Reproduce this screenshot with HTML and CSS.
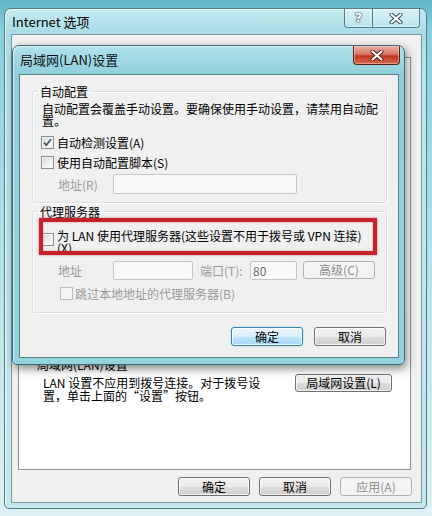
FILE: index.html
```html
<!DOCTYPE html>
<html lang="zh-CN">
<head>
<meta charset="utf-8">
<title>Internet 选项</title>
<link rel="stylesheet" href="styles.css">
</head>
<body>
<div class="desk">
  <div class="win">
    <div class="win-title">
      <span class="win-caption">Internet 选项</span>
      <div class="capbtns">
        <span class="cb help">?</span>
        <span class="cb close"><svg width="14" height="11" viewBox="0 0 14 11"><path d="M2.5 1.5 L11.5 9.5 M11.5 1.5 L2.5 9.5" stroke="#2b4a55" stroke-width="4" stroke-linecap="round"/><path d="M2.5 1.5 L11.5 9.5 M11.5 1.5 L2.5 9.5" stroke="#fff" stroke-width="2.2" stroke-linecap="round"/></svg></span>
      </div>
    </div>
    <div class="win-body">
      <div class="tabstrip"></div>
      <div class="page">
        <div class="lan-head"><span>局域网(LAN)设置</span><span class="rule"></span></div>
        <div class="lan-row">
          <p class="lan-text">LAN 设置不应用到拨号连接。对于拨号设置，单击上面的“设置”按钮。</p>
          <button class="btn lan-btn">局域网设置(L)</button>
        </div>
      </div>
      <div class="win-actions">
        <button class="btn">确定</button>
        <button class="btn">取消</button>
        <button class="btn disabled">应用(A)</button>
      </div>
    </div>
  </div>

  <div class="dlg">
    <div class="dlg-title">
      <span class="dlg-caption">局域网(LAN)设置</span>
      <span class="red-close"><svg width="14" height="11" viewBox="0 0 14 11"><path d="M2.5 1.5 L11.5 9.5 M11.5 1.5 L2.5 9.5" stroke="#5a1a10" stroke-width="4" stroke-linecap="round"/><path d="M2.5 1.5 L11.5 9.5 M11.5 1.5 L2.5 9.5" stroke="#fff" stroke-width="2.2" stroke-linecap="round"/></svg></span>
    </div>
    <div class="dlg-body">
      <fieldset class="group g1">
        <legend>自动配置</legend>
        <p class="desc">自动配置会覆盖手动设置。要确保使用手动设置，请禁用自动配置。</p>
        <div class="chk-row first">
          <span class="cbx"><svg width="11" height="11" viewBox="0 0 11 11"><path d="M2 5.5 L4.3 8.2 L9 2.2" fill="none" stroke="#3a5a78" stroke-width="1.8"/></svg></span>
          <span>自动检测设置(A)</span>
        </div>
        <div class="chk-row">
          <span class="cbx"></span>
          <span>使用自动配置脚本(S)</span>
        </div>
        <div class="addr-row">
          <span class="addr-label dim">地址(R)</span>
          <span class="field f-script"></span>
        </div>
      </fieldset>

      <fieldset class="group g2">
        <legend>代理服务器</legend>
        <div class="proxy-row">
          <span class="cbx"></span>
          <span class="proxy-text"><span class="pl">为 LAN 使用代理服务器(这些设置不用于拨号或 VPN 连接)</span><span class="pl">(X)</span></span>
          <span class="mark"></span>
        </div>
        <div class="addr-row a2">
          <span class="addr-label dim">地址</span>
          <span class="field f-addr"></span>
          <span class="port-label dim">端口(T):</span>
          <span class="field f-port">80</span>
          <button class="btn disabled adv">高级(C)</button>
        </div>
        <div class="chk-row skip">
          <span class="cbx dis"></span>
          <span class="dim">跳过本地地址的代理服务器(B)</span>
        </div>
      </fieldset>

      <div class="dlg-actions">
        <button class="btn focus">确定</button>
        <button class="btn">取消</button>
      </div>
    </div>
  </div>
</div>
</body>
</html>
```

FILE: styles.css
```css
html, body {
  margin: 0;
  padding: 0;
}
body {
  width: 432px;
  height: 516px;
  overflow: hidden;
  background: linear-gradient(180deg, #5fb4c7 0, #86cfdb 30px, #a9dde5 200px, #dff1f4 100%);
  font-family: "Noto Sans CJK SC", "Liberation Sans", sans-serif;
  font-size: 12px;
  color: #000;
}
.desk {
  position: relative;
  height: 516px;
}

/* buttons */
.btn {
  box-sizing: border-box;
  width: 72px;
  height: 19px;
  padding: 0;
  border: 1px solid #707070;
  border-radius: 3px;
  background: linear-gradient(180deg, #f2f2f2 0, #ebebeb 50%, #dddddd 51%, #cfcfcf 100%);
  box-shadow: inset 0 0 0 1px rgba(255,255,255,.75);
  font-family: "Noto Sans CJK SC", "Liberation Sans", sans-serif;
  font-size: 12px;
  line-height: 17px;
  color: #000;
  white-space: nowrap;
}
.btn.focus {
  border-color: #3c7fb1;
  background: linear-gradient(180deg, #eaf6fd 0, #d9f0fc 50%, #bee6fd 51%, #a7d9f5 100%);
  box-shadow: inset 0 0 0 1px rgba(255,255,255,.8), 0 0 2px #8fd0f0;
}
.btn.disabled {
  border-color: #adb2b5;
  background: #f4f4f4;
  color: #8d8d8d;
  box-shadow: none;
}

/* outer window */
.win {
  margin: 8px 0 0 4px;
  width: 423px;
  height: 501px;
  box-sizing: border-box;
  display: flex;
  flex-direction: column;
  border: 1px solid #4f7d88;
  border-radius: 7px 7px 5px 5px;
  background: linear-gradient(180deg, #c6ebf1 0, #a9dce6 24px, #b8e4eb 60px, #c4e9ef 100%);
  box-shadow: inset 1px 1px 0 rgba(255,255,255,.7);
}
.win-title {
  height: 25px;
  display: flex;
  align-items: flex-start;
  flex: none;
}
.win-caption {
  padding: 4px 0 0 7px;
  font-size: 13px;
  line-height: 17px;
}
.capbtns {
  margin-left: auto;
  margin-right: 6px;
  display: flex;
  height: 18px;
  border: 1px solid #4e7f8a;
  border-top: none;
  border-radius: 0 0 4px 4px;
  background: linear-gradient(180deg, rgba(255,255,255,.35), rgba(255,255,255,.1));
  box-shadow: inset 0 -1px 0 rgba(255,255,255,.6);
}
.cb {
  display: flex;
  align-items: center;
  justify-content: center;
}
.cb.help {
  width: 27px;
  font-family: "DejaVu Sans", sans-serif;
  font-weight: bold;
  font-size: 13px;
  line-height: 16px;
  color: #fff;
  text-shadow: 0 0 1px #2b4a55, 0 0 1px #2b4a55, 0 0 2px #2b4a55;
}
.cb.close {
  width: 46px;
  border-left: 1px solid #4e7f8a;
}
.win-body {
  flex: 1;
  margin: 0 4px 5px 6px;
  border: 1px solid #7b98a1;
  background: #f0f0f0;
  display: flex;
  flex-direction: column;
}
.tabstrip {
  height: 22px;
  flex: none;
}
.page {
  flex: 1;
  margin: 0 10px 0 6px;
  background: #fff;
  border: 1px solid #8e9196;
  padding-top: 299px;
  box-sizing: border-box;
}
.lan-head {
  display: flex;
  align-items: center;
  padding: 0 18px;
  line-height: 15px;
  height: 15px;
}
.rule {
  margin-left: auto;
  width: 185px;
  height: 1px;
  background: #a0a0a0;
  box-shadow: 0 1px 0 #fff;
}
.lan-row {
  display: flex;
  align-items: flex-start;
  margin-top: 2px;
}
.lan-text {
  margin: 2px 0 0 24px;
  width: 222px;
  line-height: 13px;
}
.btn.lan-btn {
  margin-left: auto;
  margin-right: 18px;
  width: 97px;
  height: 18px;
  line-height: 16px;
}
.win-actions {
  display: flex;
  justify-content: flex-end;
  gap: 9px;
  padding: 7px 9px 6px 0;
}

/* dialog */
.dlg {
  position: absolute;
  left: 12px;
  top: 37px;
  width: 393px;
  height: 320px;
  box-sizing: border-box;
  display: flex;
  flex-direction: column;
  border: 1px solid #3d6873;
  border-radius: 7px 7px 5px 5px;
  background: linear-gradient(180deg, #b0e2ea 0, #8fcfdb 28px, #93d3de 100%);
  box-shadow: inset 1px 1px 0 rgba(255,255,255,.6), 2px 4px 10px rgba(0,0,0,.45);
}
.dlg-title {
  height: 28px;
  flex: none;
  display: flex;
  align-items: flex-start;
}
.dlg-caption {
  padding: 5px 0 0 7px;
  font-size: 13px;
  line-height: 17px;
  color: #111;
}
.red-close {
  margin-left: auto;
  margin-right: 4px;
  width: 47px;
  height: 19px;
  box-sizing: border-box;
  display: flex;
  align-items: center;
  justify-content: center;
  border: 1px solid #5a1e14;
  border-top: none;
  border-radius: 0 0 4px 4px;
  background: linear-gradient(180deg, #eab0a2 0, #d9786a 45%, #c0361f 55%, #d4674e 100%);
  box-shadow: inset 0 0 0 1px rgba(255,220,210,.45);
}
.dlg-body {
  flex: 1;
  margin: 0 5px 6px 6px;
  border: 1px solid #5e7e88;
  background: #f0f0f0;
  padding: 0 11px 0 12px;
}
.group {
  margin: 0;
  min-width: 0;
  border: 1px solid #d5dfe5;
  border-radius: 3px;
  box-shadow: inset 1px 1px 0 #fff, 1px 1px 0 #fff;
}
.group legend {
  padding: 0 2px;
  margin-left: -4px;
  line-height: 15px;
  font-size: 12px;
}
.g1 {
  margin-top: 9px;
  padding: 0 8px 8px 9px;
}
.g2 {
  margin-top: 1px;
  padding: 0 8px 9px 9px;
}
.desc {
  margin: 4px 0 0;
  width: 340px;
  line-height: 12px;
}
.chk-row {
  display: flex;
  align-items: center;
  gap: 3px;
  height: 20px;
}
.chk-row.first {
  margin-top: 5px;
}
.cbx {
  flex: none;
  width: 13px;
  height: 13px;
  box-sizing: border-box;
  margin-left: -1px;
  border: 1px solid #8e8f8f;
  background: linear-gradient(135deg, #d6d6d6 0, #f2f2f2 60%, #fdfdfd 100%);
  box-shadow: inset 0 0 0 1px #f4f4f4;
  display: flex;
  align-items: center;
  justify-content: center;
}
.cbx.dis {
  border-color: #bcbcbc;
  background: #f4f4f4;
}
.dim {
  color: #9a9a9a;
}
.addr-row {
  display: flex;
  align-items: center;
  height: 20px;
  margin-top: 2px;
}
.addr-label {
  margin-left: 16px;
  width: 55px;
  flex: none;
}
.field {
  box-sizing: border-box;
  height: 20px;
  border: 1px solid #c3c7cb;
  border-radius: 2px;
  background: #f9f9f9;
  line-height: 18px;
  padding-left: 2px;
  color: #6a6a6a;
}
.f-script {
  width: 184px;
}
.proxy-row {
  position: relative;
  display: flex;
  align-items: flex-start;
  gap: 3px;
  margin-top: 11px;
}
.proxy-row .cbx {
  margin-top: 3px;
}
.proxy-text {
  display: flex;
  flex-direction: column;
}
.pl {
  display: block;
  height: 12px;
  line-height: 12px;
  white-space: nowrap;
}
.mark {
  position: absolute;
  left: -3px;
  top: -12px;
  width: 338px;
  height: 37px;
  box-sizing: border-box;
  border: 4px solid #c4222b;
  box-shadow: 0 0 2px rgba(200, 30, 40, .6), inset 0 0 2px rgba(200, 30, 40, .5);
  pointer-events: none;
}
.a2 {
  margin-top: 6px;
}
.a2 .field {
  height: 19px;
  line-height: 17px;
}
.f-addr {
  width: 80px;
}
.port-label {
  margin-left: 7px;
  width: 50px;
  flex: none;
}
.f-port {
  width: 47px;
}
.btn.adv {
  margin-left: 6px;
  height: 18px;
  line-height: 16px;
}
.chk-row.skip {
  margin-top: 3px;
  gap: 2px;
}
.skip .cbx {
  margin-left: 18px;
}
.dlg-actions {
  display: flex;
  justify-content: flex-end;
  gap: 11px;
  margin-top: 14px;
  padding-right: 1px;
}
```
